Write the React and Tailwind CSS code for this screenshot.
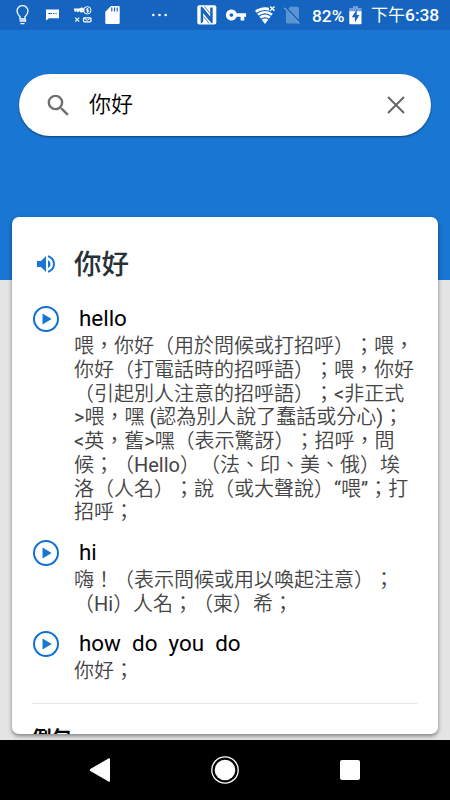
import { MdSearch, MdVolumeUp, MdVpnKey } from "react-icons/md";

const ENTRIES = [
  {
    word: "hello",
    lines: [
      "喂，你好（用於問候或打招呼）；喂，",
      "你好（打電話時的招呼語）；喂，你好",
      "（引起別人注意的招呼語）；<非正式",
      ">喂，嘿 (認為別人說了蠢話或分心)；",
      "<英，舊>嘿（表示驚訝）；招呼，問",
      "候；（Hello）（法、印、美、俄）埃",
      "洛（人名）；說（或大聲說）“喂”；打",
      "招呼；",
    ],
  },
  {
    word: "hi",
    lines: ["嗨！（表示問候或用以喚起注意）；", "（Hi）人名；（柬）希；"],
  },
  {
    word: "how  do  you  do",
    lines: ["你好；"],
  },
];

// -----------------------------
// STATUS BAR
// -----------------------------
function StatusBar() {
  return (
    <div className="flex h-[30px] shrink-0 items-center bg-[#1565c0] pl-4 text-white">
      {/* bulb */}
      <svg className="h-5 w-[13px] shrink-0" viewBox="0 0 13 20" fill="none" stroke="currentColor" strokeWidth="1.3">
        <path d="M4 14V11.8C2.2 10 1 8.300 1 6.100a5.500 5.500 0 0 1 11 0c0 2.200-1.200 3.900-3 5.700V14z" />
        <path d="M3.500 16h6M4.500 18.600h4M9.500 14v3" />
      </svg>
      {/* message */}
      <svg className="ml-[17px] h-5 w-[13px] shrink-0" viewBox="0 0 13 20" fill="currentColor">
        <path d="M0 4.500h13v8.700H3L0 15.500z" />
        <path d="M2.300 8.500h3.700M7 8.500h1.500M9.500 8.500h1.200" stroke="#1565c0" strokeWidth="1" />
      </svg>
      {/* key, coin, cross, mail */}
      <svg className="ml-[15px] h-5 w-[18px] shrink-0" viewBox="0 0 18 20" fill="none" stroke="currentColor">
        <path d="M0 4.500h6M1.500 4.500v2.200M4 4.500V7" strokeWidth="1.800" />
        <circle cx="7.800" cy="5" r="2.500" fill="currentColor" stroke="none" />
        <circle cx="13.300" cy="5.300" r="3.700" />
        <path d="M14.600 3.900h-2v1.400h1.900v1.500h-2M13.500 3v4.800" strokeWidth=".8" />
        <path d="M1.200 12.700l4 4M5.200 12.700l-4 4" strokeWidth="1.100" />
        <rect x="9.500" y="12.800" width="7.500" height="4" rx="1" strokeWidth="1.300" />
        <path d="M9.500 13l3.700 2.300L17 13" />
      </svg>
      {/* sd card */}
      <svg className="ml-[13px] h-5 w-[15px] shrink-0" viewBox="0 0 15 20" fill="currentColor">
        <path d="M6 1h7.500a1.200 1.200 0 0 1 1.200 1.200v15.600a1.200 1.200 0 0 1-1.200 1.200h-12A1.200 1.200 0 0 1 .3 17.800V6.700z" />
        <path d="M6.800 2.500v4M9.500 2.500v4M12.200 2.500v4" stroke="#1565c0" strokeWidth="1.200" />
      </svg>
      {/* more */}
      <svg className="ml-8 h-5 w-4 shrink-0" viewBox="0 0 16 20" fill="currentColor">
        <circle cx="1.300" cy="10" r="1.300" />
        <circle cx="7.500" cy="10" r="1.300" />
        <circle cx="13.700" cy="10" r="1.300" />
      </svg>
      {/* nfc */}
      <svg className="ml-[29px] h-5 w-5 shrink-0" viewBox="0 0 20 20">
        <rect x=".3" y=".2" width="19" height="19.300" rx="2" fill="#fff" />
        <path d="M3.700 18.500V2.200c0-1 1-1 1.700-.2l7.800 9.500V2.500h2.500v15c0 1-.9 1.100-1.600.3L6.200 8.300v8.500z" fill="#1565c0" />
        <path d="M7.300 1.300l5.900 7.200M6.500 11.500l5.700 7" fill="none" stroke="#1565c0" strokeWidth=".8" />
      </svg>
      <MdVpnKey className="ml-2 h-[22px] w-[22px] shrink-0" />
      {/* wifi */}
      <svg className="ml-2 h-5 w-[21px] shrink-0" viewBox="0 0 21 20">
        <path d="M0 5.800C5.500 1 14.500 1 20 5.800L10 19z" fill="#fff" />
        <path d="M1.500 8.500c5-4 12-4 17 0M3.500 11.500c4-3.200 9-3.200 13 0M5.800 14.500c2.600-2 5.800-2 8.400 0" fill="none" stroke="#1565c0" strokeWidth="1.200" />
        <path d="M14 0h7v8h-4l-3-3z" fill="#1565c0" />
        <path d="M15.200 1.500l4.300 4.300M19.500 1.500l-4.300 4.300" stroke="#fff" strokeWidth="1.400" />
      </svg>
      {/* no sim */}
      <svg className="ml-2 h-5 w-[17px] shrink-0" viewBox="0 0 17 20">
        <path d="M6 1.800h7.500A1.500 1.500 0 0 1 15 3.300V17a1.500 1.500 0 0 1-1.500 1.500h-10A1.500 1.500 0 0 1 2 17V6.500z" fill="#5b93d3" />
        <path d="M1 2.500L16 18" stroke="#1565c0" strokeWidth="3" />
        <path d="M.3 2.800L15.300 18.500" stroke="#82addd" strokeWidth="1.100" />
      </svg>
      <span className="ml-[11px] w-[33px] shrink-0 pt-px text-[17.3px] leading-5 font-medium">82%</span>
      {/* battery */}
      <svg className="ml-1 h-5 w-[13px] shrink-0" viewBox="0 0 13 20">
        <path d="M4 1h5v2h3.500v5H.3V3H4z" fill="#6e9fd8" />
        <path d="M.3 6.300h12.200v12a1 1 0 0 1-1 1H1.300a1 1 0 0 1-1-1z" fill="#fff" />
        <path d="M7.700 4.500L2.800 12.300h3.100v5.200l4.500-7.400H7.700z" fill="#1565c0" />
      </svg>
      <span className="ml-[9px] shrink-0 text-[17.4px] leading-5 font-medium whitespace-nowrap">
        <span className="text-[17px] font-normal">下午</span>6:38
      </span>
    </div>
  );
}

function SearchBox() {
  return (
    <div className="mx-[19px] flex h-[62px] items-center rounded-full bg-white pr-[26px] pl-[25px] shadow-[0_1px_2px_rgba(0,0,0,0.45)]">
      <MdSearch className="h-[29px] w-[29px] text-[#707070]" />
      <span className="ml-4 flex-1 text-[22px] leading-7 font-[350] text-black">你好</span>
      <svg className="h-[18px] w-[18px]" viewBox="0 0 18 18" stroke="#666" strokeWidth="2">
        <path d="M1 1l16 16M17 1L1 17" />
      </svg>
    </div>
  );
}

// Latin runs are set a step heavier than the Chinese text around them
function MixedText({ text }) {
  return text.split(/([ -~“”]+)/).map((part, i) =>
    i % 2 ? (
      <span key={i} className="font-normal">
        {part}
      </span>
    ) : (
      part
    )
  );
}

function Entry({ word, lines }) {
  return (
    <div className="flex">
      <div className="mt-[5px] flex h-[26px] w-[26px] shrink-0 items-center justify-center rounded-full border-2 border-[#1070d8] text-[#1976d2]">
        <svg className="h-3 w-[10px] translate-x-px" viewBox="0 0 10 12" fill="currentColor">
          <path d="M.5.5v11L9.700 6z" />
        </svg>
      </div>
      <div className="ml-[15px]">
        <div className="h-[33px] pl-[5px] text-[22.4px] leading-[34px] whitespace-pre text-black">{word}</div>
        {lines.map((line) => (
          <div
            key={line}
            className="h-[23.8px] text-[20px] leading-[25px] font-[350] whitespace-pre text-[#444] [text-spacing-trim:space-all]"
          >
            <MixedText text={line} />
          </div>
        ))}
      </div>
    </div>
  );
}

// -----------------------------
// NAVIGATION BAR
// -----------------------------
function NavBar() {
  return (
    <div className="mt-auto flex h-[60px] shrink-0 items-center justify-between bg-black pr-[90px] pl-[89px]">
      <svg className="h-6 w-[22px]" viewBox="0 0 22 24" fill="#fff">
        <path d="M19.500.4c.8-.4 1.500-.1 1.500.7v21.800c0 .8-.7 1.100-1.500.7L1.300 13c-.7-.5-.7-1.500 0-2z" />
      </svg>
      <svg className="mr-[2px] h-7 w-7" viewBox="0 0 28 28">
        <circle cx="14" cy="14" r="13.200" fill="none" stroke="#fff" strokeWidth="1.300" />
        <circle cx="14" cy="14" r="10.300" fill="#fff" />
      </svg>
      <div className="h-5 w-5 rounded-[2px] bg-white" />
    </div>
  );
}

export default function App() {
  return (
    <div className="flex h-[800px] w-[450px] flex-col overflow-hidden bg-[#e4e4e4] font-[Roboto,'Noto_Sans_CJK_TC',sans-serif]">
      <StatusBar />
      <div className="h-[250px] shrink-0 bg-[#1976d2] pt-11">
        <SearchBox />
      </div>

      {/* result card, pulled up over the header */}
      <div className="z-10 mr-3 ml-[12.4px] -mt-[62.6px] h-[516.6px] shrink-0 overflow-hidden rounded-[7px] bg-white pr-5 shadow-[0_2px_4px_rgba(0,0,0,0.45)]">
        <div className="flex h-[83.5px] items-center pt-[9px] pl-[21.6px]">
          <MdVolumeUp className="h-6 w-6 text-[#1976d2]" />
          <h1 className="ml-4 pt-[2px] text-[27.5px] leading-9 font-medium text-[#263238]">你好</h1>
        </div>
        <div className="flex flex-col gap-[10.5px] pl-[20.6px]">
          {ENTRIES.map((entry) => (
            <Entry key={entry.word} {...entry} />
          ))}
        </div>
        <hr className="mt-[20.5px] ml-[19.6px] border-[#e8e8e8]" />
        <h2 className="mt-[21px] ml-[19.6px] text-[19.5px] leading-7 font-bold text-black">例句</h2>
      </div>

      <NavBar />
    </div>
  );
}
